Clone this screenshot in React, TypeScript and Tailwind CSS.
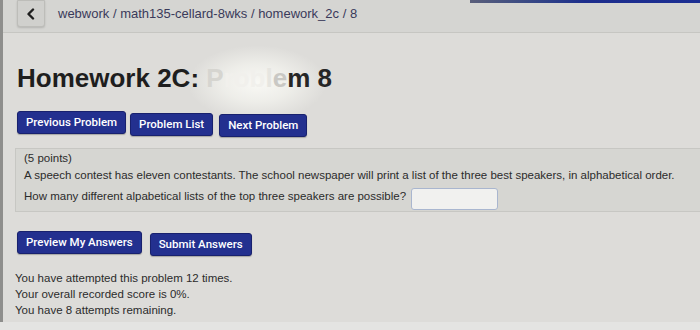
import React from "react";

function Btn({ children, className = "" }: { children: React.ReactNode; className?: string }) {
  return (
    <div
      className={
        "h-[23px] px-[8px] flex items-center rounded-[3px] bg-[#23308f] border border-[#18216e] text-white text-[11.5px] font-medium shadow-[0_1px_1px_rgba(0,0,0,0.25)] " +
        className
      }
      style={{ fontFamily: "Roboto, 'Liberation Sans', sans-serif" }}
    >
      {children}
    </div>
  );
}

export default function App() {
  return (
    <div
      className="w-[700px] h-[330px] overflow-hidden bg-[#e4e4e2] flex flex-col"
      style={{ fontFamily: "'Liberation Sans', Arial, sans-serif" }}
    >
      <div className="h-[322px] flex">
        <div className="w-[3px] bg-[#8e8e8c]" />
        <div className="flex-1 flex flex-col bg-[#dddcd9]">
          {/* header bar */}
          <div className="h-[33px] bg-[#d5d5d2] border-b border-[#c6c6c2] flex flex-col">
            <div className="h-[3px] flex justify-end">
              <div className="w-[230px] bg-gradient-to-r from-[#5a5f7a] via-[#1d2d8c] to-[#1c2f93]" />
            </div>
            <div className="flex-1 flex items-start">
              <div className="ml-[14px] -mt-[3px] w-[28px] h-[27px] rounded-b-[3px] bg-[#d0d0cd] border border-[#bdbdb9] shadow-[0_1px_2px_rgba(0,0,0,0.15)] flex items-center justify-center">
                <svg width="10" height="12" viewBox="0 0 10 12">
                  <path d="M7 1.5 L2.5 6 L7 10.5" fill="none" stroke="#1f1f1f" strokeWidth="2.4" strokeLinecap="round" strokeLinejoin="round" />
                </svg>
              </div>
              <div className="ml-[13px] mt-[3px] text-[13px] text-[#3a3a5a] leading-[16px]">
                webwork / math135-cellard-8wks / homework_2c / 8
              </div>
            </div>
          </div>

          {/* title */}
          <div className="relative ml-[14px] mt-[32px] text-[26px] leading-[26px] font-bold text-[#1e1e1e]">
            <div className="absolute left-[170px] -top-[20px] w-[140px] h-[76px] rounded-full bg-[radial-gradient(ellipse_at_center,rgba(250,250,246,0.95)_0%,rgba(245,245,240,0.7)_35%,rgba(230,230,226,0)_70%)]" />
            <span className="relative">
              Homework 2C: <span className="text-[#d6d5d0]">P</span>
              <span className="text-[#f1f0ec]">rob</span>
              <span className="text-[#e6e5e0]">l</span>
              <span className="text-[#c9c8c4]">e</span>
              <span className="text-[#262626]">m 8</span>
            </span>
          </div>

          {/* nav buttons */}
          <div className="relative ml-[14px] mt-[20px] flex gap-[4px] items-start">
            <Btn>Previous Problem</Btn>
            <Btn className="mt-[2px]">Problem List</Btn>
            <Btn className="mt-[3px] ml-[2px]">Next Problem</Btn>
          </div>

          {/* problem box */}
          <div className="ml-[12px] mt-[11px] bg-[#d6d6d2] border border-[#c7c7c3] border-r-0 pl-[8px] pt-[1px] pb-[2px] text-[11.5px] leading-[17px] text-[#2b2b2b]">
            <div>(5 points)</div>
            <div>
              A speech contest has eleven contestants. The school newspaper will print a list of the three best speakers, in alphabetical order.
            </div>
            <div className="flex items-center gap-[5px] h-[25px]">
              <span>How many different alpabetical lists of the top three speakers are possible?</span>
              <div className="w-[87px] h-[22px] bg-[#f1f1ef] border border-[#a9b6cf] rounded-[3px] mt-[4px]" />
            </div>
          </div>

          {/* submit buttons */}
          <div className="ml-[14px] mt-[19px] flex gap-[8px] items-start">
            <Btn>Preview My Answers</Btn>
            <Btn className="mt-[2px]">Submit Answers</Btn>
          </div>

          {/* status */}
          <div className="ml-[12px] mt-[14px] text-[11.5px] leading-[16px] text-[#2b2b2b]">
            <div>You have attempted this problem 12 times.</div>
            <div>Your overall recorded score is 0%.</div>
            <div>You have 8 attempts remaining.</div>
          </div>
        </div>
      </div>
    </div>
  );
}
